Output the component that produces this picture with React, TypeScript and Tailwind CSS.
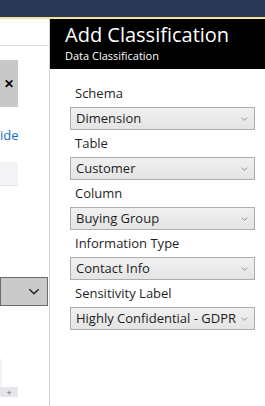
const fields = [
  { label: "Schema", value: "Dimension" },
  { label: "Table", value: "Customer" },
  { label: "Column", value: "Buying Group" },
  { label: "Information Type", value: "Contact Info" },
  { label: "Sensitivity Label", value: "Highly Confidential - GDPR" },
];

function Chevron({ className }: { className?: string }) {
  return (
    <svg viewBox="0 0 10 6" className={className} fill="none" stroke="currentColor">
      <path d="M1 1l4 4 4-4" strokeWidth="1.2" />
    </svg>
  );
}

export default function App() {
  return (
    <div
      className="flex h-[406px] w-[265px] flex-col overflow-hidden bg-white text-[#1e1e1e]"
      style={{ fontFamily: '"Open Sans", "Noto Sans", sans-serif' }}
    >
      <div className="h-[17px] shrink-0 bg-[#2b3756]" />
      <div className="h-[2px] shrink-0 bg-[#f3e29a]" />
      <div className="flex min-h-0 flex-1">
        {/* left, mostly hidden pane */}
        <div className="flex w-[49px] shrink-0 flex-col">
          <div className="h-[27px] border-b border-[#dedede]" />
          <div className="mt-[14px] flex h-[47px] w-[18px] items-center justify-center bg-[#c8c8c8] text-[12px] font-bold text-black">
            ✕
          </div>
          <div className="mt-[19px] text-[13px] leading-[18px] text-[#1a6ccb]">ide</div>
          <div className="mt-[18px] h-[24px] w-[18px] border-b border-[#e2e2e2] bg-[#f4f4f6]" />
          <div className="mt-[91px] flex h-[29px] w-[48px] items-center justify-end border border-[#6b6b6b] bg-[#cacaca] pr-[7px] text-[#222]">
            <Chevron className="h-[7px] w-[12px]" />
          </div>
          <div className="mt-[53px] h-[28px] w-[2px] bg-[#f2f2f2]" />
          <div className="flex h-[10px] w-[18px] items-end justify-center bg-[#e6e6ea] text-[9px] leading-[8px] text-[#666]">
            +
          </div>
        </div>
        <div className="w-[1px] shrink-0 bg-[#d0d0d0]" />

        {/* classification pane */}
        <div className="flex min-w-0 flex-1 flex-col">
          <div className="flex h-[50px] flex-col bg-black pl-[15px] pt-[2px] text-white">
            <div className="text-[20px] leading-[27px]">Add Classification</div>
            <div className="text-[11px] leading-[16px]">Data Classification</div>
          </div>
          <div className="flex flex-col pl-[20px] pr-[10px] pt-[11px]">
            {fields.map((f) => (
              <div key={f.label} className="flex flex-col">
                <div className="flex h-[27px] items-center pl-[5px] text-[13px]">{f.label}</div>
                <div className="flex h-[23px] items-center justify-between border border-[#adadad] bg-gradient-to-b from-[#f0f0f0] to-[#e4e4e4] pl-[5px] pr-[6px] text-[13px]">
                  <span className="whitespace-nowrap">{f.value}</span>
                  <Chevron className="h-[4px] w-[7px] text-[#777]" />
                </div>
              </div>
            ))}
          </div>
        </div>
      </div>
    </div>
  );
}
